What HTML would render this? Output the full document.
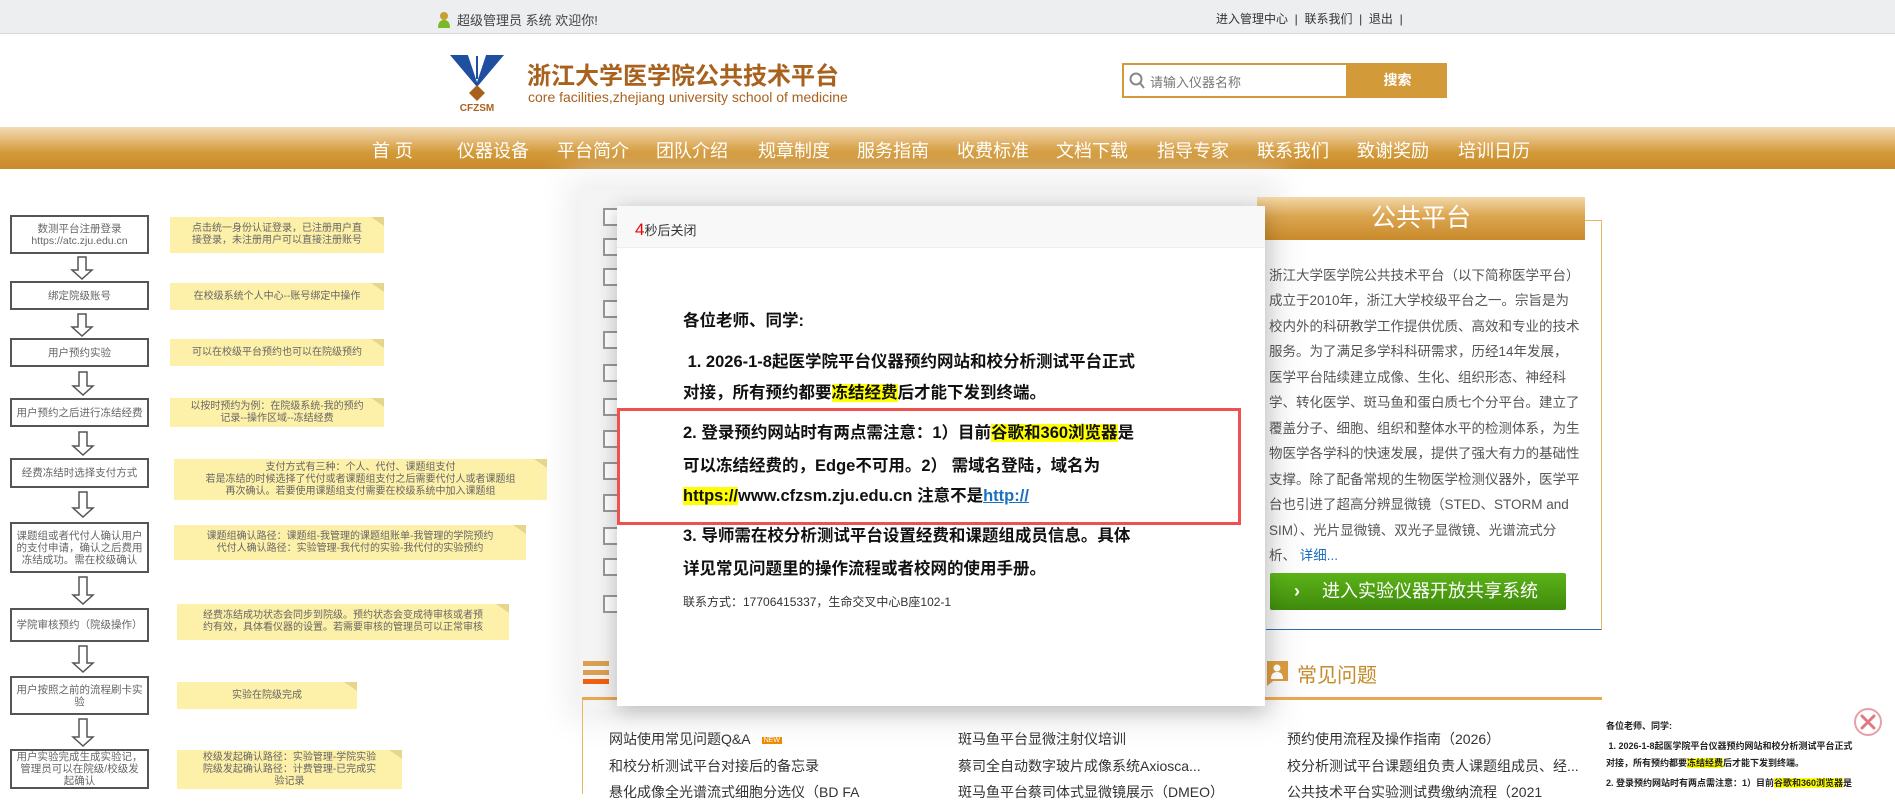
<!DOCTYPE html>
<html><head><meta charset="utf-8"><style>
*{margin:0;padding:0;box-sizing:border-box}
body{width:1895px;height:794px;overflow:hidden;position:relative;background:#fff;font-family:"Liberation Sans","Noto Sans CJK SC",sans-serif;color:#333}
.a{position:absolute;white-space:nowrap}
.top{left:0;top:0;width:1895px;height:34px;background:#eceef0;border-bottom:1px solid #d8d8d8}
.nav{left:0;top:127px;width:1895px;height:42px;background:linear-gradient(#f3dcb8 0%,#e2b56e 35%,#d39a3a 60%,#c98a2a 100%)}
.nav span{position:absolute;top:10px;color:#fff;font-size:18px}
.box{position:absolute;left:10px;width:139px;border:2px solid #555;background:#fff;font-size:10.5px;color:#666;text-align:center;line-height:12px;display:flex;align-items:center;justify-content:center;padding:0 4px;white-space:normal}
.note{position:absolute;background:#fdf0a8;font-size:10px;color:#666;text-align:center;line-height:12px;display:flex;flex-direction:column;align-items:center;justify-content:center;white-space:nowrap}
.note:after{content:"";position:absolute;right:0;top:0;border-style:solid;border-width:0 13px 9px 0;border-color:transparent #fff transparent transparent}
.note:before{content:"";position:absolute;right:0;top:0;border-style:solid;border-width:9px 0 0 13px;border-color:#e6d68a transparent transparent transparent;z-index:1}
.cb{position:absolute;left:603px;width:16px;height:18px;border:2px solid #999;border-right:none;background:#fff}
.m p{position:absolute;left:683px;font-size:16.5px;font-weight:bold;color:#111;white-space:nowrap}
.hl{background:#ffff00}
.rt{position:absolute;left:1269px;font-size:13.5px;color:#555;white-space:nowrap}
.ls{position:absolute;font-size:14px;color:#333;white-space:nowrap}
.mini{position:absolute;left:1606px;font-size:9px;font-weight:bold;color:#222;white-space:nowrap}
</style></head><body>
<div class="a top"></div>
<svg class="a" style="left:437px;top:11px" width="14" height="18" viewBox="0 0 14 18"><circle cx="7" cy="5" r="4" fill="#c8a030"/><path d="M1 17 Q1 9 7 9 Q13 9 13 17Z" fill="#7ab828"/></svg>
<div class="a" style="left:457px;top:10px;font-size:13px;color:#444">超级管理员 系统 欢迎你!</div>
<div class="a" style="left:1216px;top:10px;font-size:12px;color:#333">进入管理中心 &nbsp;| &nbsp;联系我们 &nbsp;| &nbsp;退出 &nbsp;|</div>

<svg class="a" style="left:448px;top:52px" width="58" height="60" viewBox="0 0 58 60"><path d="M2 3 L20 3 L29 30 L38 3 L56 3 L29 35Z" fill="#1f4fa0"/><path d="M20 3 L29 30 L38 3Z" fill="#fff"/><line x1="29" y1="4" x2="29" y2="27" stroke="#1f4fa0" stroke-width="2"/><path d="M29 33 L37 41 L29 49 L21 41Z" fill="#a8621e"/><text x="29" y="59" font-size="10" font-weight="bold" fill="#a8621e" text-anchor="middle" font-family="Liberation Sans">CFZSM</text></svg>
<div class="a" style="left:527px;top:56px;font-size:24px;font-weight:bold;color:#a8621e">浙江大学医学院公共技术平台</div>
<div class="a" style="left:528px;top:89px;font-size:14px;color:#a8621e">core facilities,zhejiang university school of medicine</div>

<div class="a" style="left:1122px;top:63px;width:226px;height:35px;border:2px solid #d39a3a;background:#fff"></div>
<svg class="a" style="left:1129px;top:72px" width="16" height="18" viewBox="0 0 16 18"><circle cx="7" cy="7" r="5.5" fill="none" stroke="#888" stroke-width="2"/><line x1="11" y1="11" x2="15" y2="16" stroke="#888" stroke-width="2"/></svg>
<div class="a" style="left:1150px;top:72px;font-size:13px;color:#777">请输入仪器名称</div>
<div class="a" style="left:1348px;top:63px;width:99px;height:35px;background:#d39a3a;color:#fff;font-size:14px;font-weight:bold;text-align:center;line-height:35px">搜索</div>

<div class="a nav">
<span style="left:372px">首 页</span><span style="left:457px">仪器设备</span><span style="left:557px">平台简介</span><span style="left:656px">团队介绍</span><span style="left:758px">规章制度</span><span style="left:857px">服务指南</span><span style="left:957px">收费标准</span><span style="left:1056px">文档下载</span><span style="left:1157px">指导专家</span><span style="left:1257px">联系我们</span><span style="left:1357px">致谢奖励</span><span style="left:1458px">培训日历</span>
</div>

<div class="box" style="top:215px;height:39px">数测平台注册登录<br>https://atc.zju.edu.cn</div>
<div class="box" style="top:281px;height:29px">绑定院级账号</div>
<div class="box" style="top:338px;height:29px">用户预约实验</div>
<div class="box" style="top:398px;height:29px">用户预约之后进行冻结经费</div>
<div class="box" style="top:458px;height:30px">经费冻结时选择支付方式</div>
<div class="box" style="top:522px;height:51px">课题组或者代付人确认用户的支付申请，确认之后费用冻结成功。需在校级确认</div>
<div class="box" style="top:608px;height:34px">学院审核预约（院级操作）</div>
<div class="box" style="top:676px;height:39px">用户按照之前的流程刷卡实验</div>
<div class="box" style="top:749px;height:40px">用户实验完成生成实验记，管理员可以在院级/校级发起确认</div>
<svg class="a" style="left:0;top:0" width="170" height="794">
<g fill="#fff" stroke="#555" stroke-width="1.5">
<path d="M78 257 h8 v13 h6 l-10 9 l-10 -9 h6z"/>
<path d="M78 314 h8 v13 h6 l-10 9 l-10 -9 h6z"/>
<path d="M79 372 h8 v14 h6 l-10 9 l-10 -9 h6z"/>
<path d="M79 432 h8 v14 h6 l-10 9 l-10 -9 h6z"/>
<path d="M79 492 h8 v16 h6 l-10 9 l-10 -9 h6z"/>
<path d="M79 577 h8 v18 h6 l-10 9 l-10 -9 h6z"/>
<path d="M79 646 h8 v17 h6 l-10 9 l-10 -9 h6z"/>
<path d="M79 719 h8 v18 h6 l-10 9 l-10 -9 h6z"/>
</g></svg>
<div class="note" style="left:170px;top:217px;width:214px;height:36px"><div>点击统一身份认证登录，已注册用户直</div><div>接登录，未注册用户可以直接注册账号</div></div>
<div class="note" style="left:170px;top:283px;width:214px;height:27px">在校级系统个人中心--账号绑定中操作</div>
<div class="note" style="left:170px;top:339px;width:214px;height:27px">可以在校级平台预约也可以在院级预约</div>
<div class="note" style="left:170px;top:398px;width:214px;height:29px"><div>以按时预约为例：在院级系统-我的预约</div><div>记录--操作区域--冻结经费</div></div>
<div class="note" style="left:174px;top:459px;width:373px;height:41px"><div>支付方式有三种：个人、代付、课题组支付</div><div>若是冻结的时候选择了代付或者课题组支付之后需要代付人或者课题组</div><div>再次确认。若要使用课题组支付需要在校级系统中加入课题组</div></div>
<div class="note" style="left:174px;top:525px;width:352px;height:35px"><div>课题组确认路径：课题组-我管理的课题组账单-我管理的学院预约</div><div>代付人确认路径：实验管理-我代付的实验-我代付的实验预约</div></div>
<div class="note" style="left:177px;top:604px;width:332px;height:36px"><div>经费冻结成功状态会同步到院级。预约状态会变成待审核或者预</div><div>约有效，具体看仪器的设置。若需要审核的管理员可以正常审核</div></div>
<div class="note" style="left:177px;top:682px;width:180px;height:27px">实验在院级完成</div>
<div class="note" style="left:177px;top:750px;width:225px;height:39px"><div>校级发起确认路径：实验管理-学院实验</div><div>院级发起确认路径：计费管理-已完成实</div><div>验记录</div></div>

<div class="a" style="left:580px;top:190px;width:690px;height:520px;background:#f4f4f4;box-shadow:0 0 30px 12px #eee"></div>
<div class="cb" style="top:208px"></div><div class="cb" style="top:238px"></div><div class="cb" style="top:268px"></div><div class="cb" style="top:300px"></div><div class="cb" style="top:331px"></div><div class="cb" style="top:364px"></div><div class="cb" style="top:398px"></div><div class="cb" style="top:430px"></div><div class="cb" style="top:462px"></div><div class="cb" style="top:494px"></div><div class="cb" style="top:527px"></div><div class="cb" style="top:558px"></div><div class="cb" style="top:595px"></div>

<div class="a" style="left:1266px;top:220px;width:336px;height:410px;border-right:1px solid #e8b860;border-top:1px solid #e8b860;border-bottom:1px solid #2a6cb0"></div>
<div class="a" style="left:1257px;top:197px;width:328px;height:43px;background:linear-gradient(#f3d8a8,#dba550 45%,#c98a2a);color:#fff;font-size:25px;text-align:center;line-height:43px">公共平台</div>
<div class="rt" style="top:264px">浙江大学医学院公共技术平台（以下简称医学平台）</div>
<div class="rt" style="top:289px">成立于2010年，浙江大学校级平台之一。宗旨是为</div>
<div class="rt" style="top:315px">校内外的科研教学工作提供优质、高效和专业的技术</div>
<div class="rt" style="top:340px">服务。为了满足多学科科研需求，历经14年发展，</div>
<div class="rt" style="top:366px">医学平台陆续建立成像、生化、组织形态、神经科</div>
<div class="rt" style="top:391px">学、转化医学、斑马鱼和蛋白质七个分平台。建立了</div>
<div class="rt" style="top:417px">覆盖分子、细胞、组织和整体水平的检测体系，为生</div>
<div class="rt" style="top:442px">物医学各学科的快速发展，提供了强大有力的基础性</div>
<div class="rt" style="top:468px">支撑。除了配备常规的生物医学检测仪器外，医学平</div>
<div class="rt" style="top:493px">台也引进了超高分辨显微镜（STED、STORM and</div>
<div class="rt" style="top:519px">SIM）、光片显微镜、双光子显微镜、光谱流式分</div>
<div class="rt" style="top:544px">析、 <span style="color:#1a6fc0">详细...</span></div>
<div class="a" style="left:1270px;top:573px;width:296px;height:37px;background:linear-gradient(#5cb318,#3f8a0c);border-radius:2px;color:#fff;font-size:18px;line-height:37px"><span style="margin-left:24px;font-weight:bold">›</span><span style="margin-left:22px">进入实验仪器开放共享系统</span></div>

<svg class="a" style="left:1265px;top:660px" width="24" height="26" viewBox="0 0 24 26"><rect x="2" y="1" width="21" height="20" fill="#d89a40"/><path d="M2 21 L2 26 L8 21Z" fill="#d89a40"/><circle cx="12" cy="8" r="3.5" fill="#fff"/><path d="M6 19 Q6 12 12 12 Q18 12 18 19Z" fill="#fff"/></svg>
<div class="a" style="left:1297px;top:659px;font-size:20px;color:#c58a2a">常见问题</div>
<div class="a" style="left:582px;top:697px;width:1020px;height:3px;background:#e8a850"></div>
<div class="a" style="left:582px;top:700px;width:1px;height:94px;background:#e8b860"></div>
<svg class="a" style="left:583px;top:660px" width="26" height="26" viewBox="0 0 26 26"><rect x="0" y="1" width="26" height="5" fill="#d8a050"/><rect x="0" y="10" width="26" height="5" fill="#d8a050"/><rect x="0" y="19" width="26" height="5" fill="#f06010"/></svg>
<div class="ls" style="left:609px;top:729px">网站使用常见问题Q&amp;A <span style="font-size:7px;background:#f08a00;color:#fff;padding:0 2px;margin-left:8px;vertical-align:2px">NEW</span></div>
<div class="ls" style="left:609px;top:756px">和校分析测试平台对接后的备忘录</div>
<div class="ls" style="left:609px;top:782px">悬化成像全光谱流式细胞分选仪（BD FA</div>
<div class="ls" style="left:958px;top:729px">斑马鱼平台显微注射仪培训</div>
<div class="ls" style="left:958px;top:756px">蔡司全自动数字玻片成像系统Axiosca...</div>
<div class="ls" style="left:958px;top:782px">斑马鱼平台蔡司体式显微镜展示（DMEO）</div>
<div class="ls" style="left:1287px;top:729px">预约使用流程及操作指南（2026）</div>
<div class="ls" style="left:1287px;top:756px">校分析测试平台课题组负责人课题组成员、经...</div>
<div class="ls" style="left:1287px;top:782px">公共技术平台实验测试费缴纳流程（2021</div>

<div class="mini" style="top:719px">各位老师、同学:</div>
<div class="mini" style="top:739px">&nbsp;1. 2026-1-8起医学院平台仪器预约网站和校分析测试平台正式</div>
<div class="mini" style="top:756px">对接，所有预约都要<span class="hl">冻结经费</span>后才能下发到终端。</div>
<div class="mini" style="top:776px">2. 登录预约网站时有两点需注意：1）目前<span class="hl">谷歌和360浏览器</span>是</div>
<svg class="a" style="left:1853px;top:707px" width="30" height="30" viewBox="0 0 30 30"><circle cx="15" cy="15" r="13" fill="none" stroke="#e8a0a8" stroke-width="2"/><path d="M9 9 L21 21 M21 9 L9 21" stroke="#e07880" stroke-width="3" stroke-linecap="round"/></svg>

<div class="a m" style="left:617px;top:206px;width:648px;height:500px;background:#fff;box-shadow:0 4px 20px rgba(0,0,0,.25)">
<div style="height:42px;background:#f8f8f8;border-bottom:1px solid #eee;padding:14px 0 0 18px;font-size:13px;color:#333"><span style="color:#e00;font-size:17px">4</span>秒后关闭</div>
</div>
<div class="m">
<p style="top:307px">各位老师、同学:</p>
<p style="top:348px">&nbsp;1. 2026-1-8起医学院平台仪器预约网站和校分析测试平台正式</p>
<p style="top:379px">对接，所有预约都要<span class="hl">冻结经费</span>后才能下发到终端。</p>
<p style="top:419px">2. 登录预约网站时有两点需注意：1）目前<span class="hl">谷歌和360浏览器</span>是</p>
<p style="top:452px">可以冻结经费的，Edge不可用。2） 需域名登陆，域名为</p>
<p style="top:482px"><span class="hl">https://</span>www.cfzsm.zju.edu.cn 注意不是<span style="color:#1a6fc0;text-decoration:underline">http://</span></p>
<p style="top:522px">3. 导师需在校分析测试平台设置经费和课题组成员信息。具体</p>
<p style="top:555px">详见常见问题里的操作流程或者校网的使用手册。</p>
<p style="top:593px;font-size:12px;font-weight:normal;color:#333">联系方式：17706415337，生命交叉中心B座102-1</p>
</div>
<div class="a" style="left:617px;top:408px;width:624px;height:117px;border:3px solid #f05050"></div>
</body></html>
